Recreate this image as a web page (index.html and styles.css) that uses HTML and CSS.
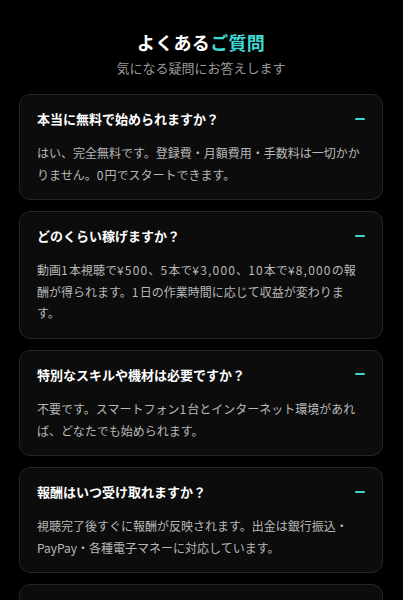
FILE: index.html
```html
<!DOCTYPE html>
<html lang="ja">
<head>
    <meta charset="UTF-8">
    <meta name="viewport" content="width=device-width, initial-scale=1.0">
    <title>よくあるご質問</title>
    <link rel="stylesheet" href="styles.css">
</head>
<body>
    <section class="faq">
        <h2 class="faq-title">よくある<span class="accent">ご質問</span></h2>
        <p class="faq-sub">気になる疑問にお答えします</p>

        <div class="faq-list">
            <div class="faq-item">
                <div class="faq-q">
                    <span>本当に無料で始められますか？</span>
                    <span class="toggle"></span>
                </div>
                <p class="faq-a">はい、完全無料です。登録費・月額費用・手数料は一切かかりません。<span class="num">0</span>円でスタートできます。</p>
            </div>

            <div class="faq-item">
                <div class="faq-q">
                    <span>どのくらい稼げますか？</span>
                    <span class="toggle"></span>
                </div>
                <p class="faq-a">動画<span class="num">1</span>本視聴で<span class="num">¥500</span>、<span class="num">5</span>本で<span class="num">¥3,000</span>、<span class="num">10</span>本で<span class="num">¥8,000</span>の報酬が得られます。<span class="num">1</span>日の作業時間に応じて収益が変わります。</p>
            </div>

            <div class="faq-item">
                <div class="faq-q">
                    <span>特別なスキルや機材は必要ですか？</span>
                    <span class="toggle"></span>
                </div>
                <p class="faq-a">不要です。スマートフォン<span class="num">1</span>台とインターネット環境があれば、どなたでも始められます。</p>
            </div>

            <div class="faq-item">
                <div class="faq-q">
                    <span>報酬はいつ受け取れますか？</span>
                    <span class="toggle"></span>
                </div>
                <p class="faq-a">視聴完了後すぐに報酬が反映されます。出金は銀行振込・PayPay・各種電子マネーに対応しています。</p>
            </div>

            <div class="faq-item">
                <div class="faq-q">
                    <span>スマホだけで作業できますか？</span>
                    <span class="toggle"></span>
                </div>
                <p class="faq-a">はい、スマートフォンだけで全ての作業が完了します。</p>
            </div>
        </div>
    </section>
</body>
</html>
```

FILE: styles.css
```css
body {
    margin: 0;
    padding: 0;
    background: #000;
    color: #fff;
    font-family: "Noto Sans CJK JP", "Noto Sans", sans-serif;
}

.faq {
    padding: 30px 20px 40px 19px;
}

.faq-title {
    margin: 0;
    text-align: center;
    font-size: 18px;
    line-height: 25px;
    font-weight: bold;
    letter-spacing: 0.3px;
}

.accent {
    color: #3fd9d3;
}

.faq-sub {
    margin: 3px 0 16px;
    text-align: center;
    font-size: 13px;
    line-height: 20px;
    color: #9a9a9a;
}

.faq-list {
    display: flex;
    flex-direction: column;
    gap: 11px;
}

.faq-item {
    background: #0c0c0c;
    border: 1px solid #252525;
    border-radius: 11px;
    padding: 15px 17px 14px 17px;
}

.faq-q {
    display: flex;
    align-items: center;
    justify-content: space-between;
    font-size: 13px;
    line-height: 17px;
    font-weight: bold;
    color: #fff;
}

.toggle {
    width: 10px;
    height: 2px;
    background: #3fd9d3;
    border-radius: 1px;
    flex-shrink: 0;
}

.faq-a {
    margin: 15px 0 0;
    font-size: 12px;
    line-height: 21.6px;
    color: #b8b8b8;
}

.num {
    letter-spacing: 1.2px;
}
```
